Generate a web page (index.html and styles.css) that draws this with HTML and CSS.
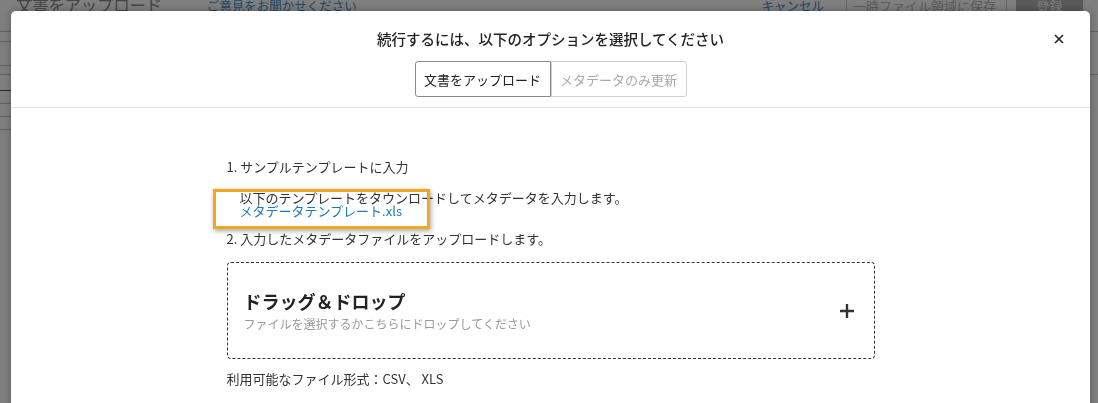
FILE: index.html
```html
<!DOCTYPE html>
<html lang="ja">

<head>
    <meta charset="UTF-8">
    <meta name="viewport" content="width=device-width, initial-scale=1.0">
    <title>文書をアップロード</title>
    <link rel="stylesheet" href="styles.css">
</head>

<body>
    <div class="page">
        <header class="page-head">
            <div class="page-head-left">
                <span class="page-title">文書をアップロード</span>
                <a class="feedback" href="#">ご意見をお聞かせください</a>
            </div>
            <div class="page-actions">
                <a class="act-link" href="#">キャンセル</a>
                <span class="act-sep sep-first"></span>
                <span class="act-muted">一時ファイル領域に保存</span>
                <span class="act-sep sep-second"></span>
                <span class="act-btn">登録</span>
            </div>
        </header>
        <div class="page-body">
            <div class="side-rows">
                <div class="row r1"></div>
                <div class="row r2"></div>
                <div class="row r3"></div>
                <div class="row r4"></div>
                <div class="row r5 dark"></div>
                <div class="row r6"></div>
                <div class="row r7"></div>
                <div class="row r8"></div>
            </div>
            <div class="main-rows">
                <div class="row m1"></div>
                <div class="row m2"></div>
            </div>
        </div>
    </div>

    <div class="overlay">
        <div class="modal">
            <div class="modal-head">
                <h2 class="modal-title">続行するには、以下のオプションを選択してください</h2>
                <button class="close" aria-label="閉じる">
                    <svg width="10" height="10" viewBox="0 0 10 10">
                        <path d="M1 1L9 9M9 1L1 9" stroke="#222" stroke-width="1.6" fill="none" />
                    </svg>
                </button>
                <div class="toggle">
                    <button class="toggle-btn active">文書をアップロード</button>
                    <button class="toggle-btn">メタデータのみ更新</button>
                </div>
            </div>

            <div class="modal-body">
                <div class="steps">
                    <p class="step">1. サンプルテンプレートに入力</p>
                    <div class="step-desc">
                        <span>以下のテンプレートをタウンロードしてメタデータを入力します。</span>
                        <a class="template-link" href="#">メタデータテンプレート.xls</a>
                        <span class="highlight"></span>
                    </div>
                    <p class="step step-two">2. 入力したメタデータファイルをアップロードします。</p>

                    <div class="dropzone">
                        <div class="drop-text">
                            <div class="drop-title">ドラッグ＆ドロップ</div>
                            <div class="drop-sub">ファイルを選択するかこちらにドロップしてください</div>
                        </div>
                        <svg class="drop-plus" width="16" height="16" viewBox="0 0 16 16">
                            <path d="M8 1V15M1 8H15" stroke="#333" stroke-width="2.4" fill="none" />
                        </svg>
                    </div>

                    <p class="formats">利用可能なファイル形式：CSV、 XLS</p>
                </div>
            </div>
        </div>
    </div>
</body>

</html>
```

FILE: styles.css
```css
body {
    font-family: "Noto Sans CJK JP", "Noto Sans", sans-serif;
    background-color: #fff;
    color: #333;
    margin: 0;
    height: 100vh;
    overflow: hidden;
}

/* page behind the dialog */
.page-head {
    display: flex;
    justify-content: space-between;
    align-items: center;
    height: 26px;
    margin-top: -8px;
    padding: 0 15px 0 16px;
}

.page-head-left {
    display: flex;
    align-items: center;
    gap: 45px;
}

.page-title {
    font-size: 16.5px;
    color: #8a8a8a;
    letter-spacing: -0.3px;
}

.feedback,
.act-link {
    font-size: 12.5px;
    color: #3a8ed0;
    text-decoration: none;
}

.page-actions {
    display: flex;
    align-items: center;
    font-size: 13px;
}

.act-sep {
    width: 1px;
    height: 20px;
    background-color: #ccc;
}

.sep-first {
    margin: 0 6px 0 22px;
}

.sep-second {
    margin: 0 9px 0 10px;
}

.act-muted {
    color: #b8b8b8;
}

.act-btn {
    width: 67px;
    text-align: center;
    background-color: #b4b4b4;
    color: #fff;
    padding: 4px 0;
    border-radius: 2px;
}

.page-body {
    display: flex;
    justify-content: space-between;
}

.side-rows,
.main-rows {
    width: 200px;
}

.row {
    border-bottom: 1px solid #c4c4c4;
}

.row.dark {
    border-bottom-color: #555;
}

.r1 { height: 13px; }
.r2 { height: 9px; }
.r3 { height: 23px; }
.r4 { height: 8px; }
.r5 { height: 15px; }
.r6 { height: 12px; }
.r7 { height: 12px; }
.r8 { height: 12px; }
.m1 { height: 13px; }
.m2 { height: 42px; }

/* dialog */
.overlay {
    position: fixed;
    top: 0;
    left: 0;
    right: 0;
    bottom: 0;
    background-color: rgba(0, 0, 0, 0.5);
    padding: 11px 8px 0 11px;
}

.modal {
    position: relative;
    background-color: #fff;
    border-radius: 5px;
    height: 420px;
    box-shadow: 0 0 8px rgba(0, 0, 0, 0.3);
}

.modal-head {
    display: flex;
    flex-direction: column;
    align-items: center;
    padding: 18px 0 10px;
    border-bottom: 1px solid #e3e3e3;
}

.modal-title {
    margin: 0;
    font-size: 14.5px;
    font-weight: 500;
    line-height: 20px;
    color: #222;
}

.close {
    position: absolute;
    top: 22px;
    right: 25px;
    width: 12px;
    height: 12px;
    padding: 1px;
    border: none;
    background: none;
    cursor: pointer;
    display: flex;
}

.toggle {
    display: flex;
    margin-top: 12px;
}

.toggle-btn {
    width: 136px;
    height: 36px;
    font-family: inherit;
    font-size: 13px;
    color: #aaa;
    background-color: #fff;
    border: 1px solid #cfcfcf;
    border-radius: 0 3px 3px 0;
    padding: 0;
    cursor: pointer;
}

.toggle-btn.active {
    color: #222;
    border-color: #8a8a8a;
    border-radius: 3px 0 0 3px;
}

.modal-body {
    display: flex;
    justify-content: center;
}

.steps {
    width: 648px;
    padding-top: 50px;
    font-size: 13px;
    color: #333;
}

.step {
    margin: 0;
    line-height: 18px;
}

.step-desc {
    position: relative;
    display: flex;
    flex-direction: column;
    margin-top: 15px;
    padding-left: 13px;
    line-height: 13px;
}

.template-link {
    color: #1f79bd;
    text-decoration: none;
}

.highlight {
    position: absolute;
    left: -14px;
    top: -2px;
    width: 211px;
    height: 34px;
    border: 3px solid #f4a620;
    box-shadow: 1px 2px 5px rgba(0, 0, 0, 0.35);
}

.step-two {
    margin-top: 13px;
}

.dropzone {
    display: flex;
    align-items: center;
    justify-content: space-between;
    height: 95px;
    margin-top: 14px;
    padding: 0 19px 0 16px;
    border: 1px dashed #333;
    border-radius: 4px;
}

.drop-text {
    display: flex;
    flex-direction: column;
    gap: 2px;
    margin-top: 1px;
}

.drop-title {
    font-size: 18px;
    font-weight: bold;
    line-height: 24px;
    color: #222;
}

.drop-sub {
    font-size: 12px;
    line-height: 18px;
    color: #999;
}

.formats {
    margin: 11px 0 0;
    line-height: 18px;
    color: #333;
}
```
